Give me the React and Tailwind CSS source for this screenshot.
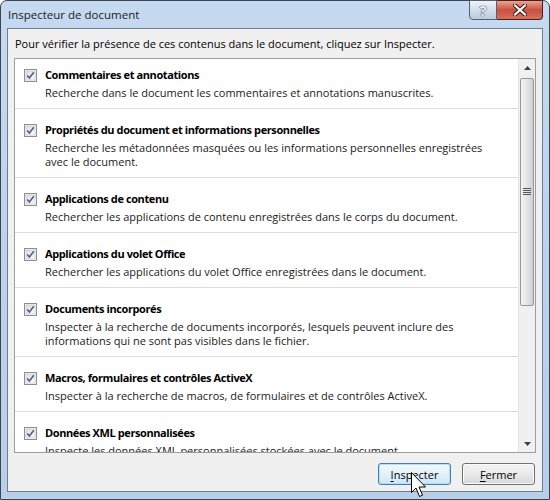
const items = [
  {
    title: 'Commentaires et annotations',
    desc: ['Recherche dans le document les commentaires et annotations manuscrites.'],
  },
  {
    title: 'Propriétés du document et informations personnelles',
    desc: [
      'Recherche les métadonnées masquées ou les informations personnelles enregistrées',
      'avec le document.',
    ],
  },
  {
    title: 'Applications de contenu',
    desc: ['Rechercher les applications de contenu enregistrées dans le corps du document.'],
  },
  {
    title: 'Applications du volet Office',
    desc: ['Rechercher les applications du volet Office enregistrées dans le document.'],
  },
  {
    title: 'Documents incorporés',
    desc: [
      'Inspecter à la recherche de documents incorporés, lesquels peuvent inclure des',
      'informations qui ne sont pas visibles dans le fichier.',
    ],
  },
  {
    title: 'Macros, formulaires et contrôles ActiveX',
    desc: ['Inspecter à la recherche de macros, de formulaires et de contrôles ActiveX.'],
  },
  {
    title: 'Données XML personnalisées',
    desc: ['Inspecte les données XML personnalisées stockées avec le document.'],
  },
];

function CheckBox() {
  return (
    <svg width="13" height="13" viewBox="0 0 13 13" className="shrink-0">
      <defs>
        <linearGradient id="cbg" x1="0" y1="0" x2="1" y2="1">
          <stop offset="0" stopColor="#dcdcdc" />
          <stop offset="1" stopColor="#fbfbfb" />
        </linearGradient>
      </defs>
      <rect x="0.5" y="0.5" width="12" height="12" fill="#f4f4f4" stroke="#8e8f8f" />
      <rect x="2" y="2" width="9" height="9" fill="url(#cbg)" stroke="#c6c6c6" strokeWidth="0.6" />
      <path d="M3.2 6.4 L5.4 9 L9.8 3.2" fill="none" stroke="#4a5f97" strokeWidth="1.6" />
    </svg>
  );
}

function Item({ item, first }) {
  return (
    <div className={`border-b border-[#dcdcdc] pb-[8px] ${first ? 'pt-[8px]' : 'pt-[13px]'}`}>
      <div className="flex items-center gap-[8px] pl-[9px]">
        <CheckBox />
        <span className="font-bold leading-[16px] tracking-[-0.4px] text-[#000]">{item.title}</span>
      </div>
      <div className="mt-[3px] pl-[30px] leading-[14px] text-[#1a1a1a]">
        {item.desc.map((d, i) => (
          <div key={i}>{d}</div>
        ))}
      </div>
    </div>
  );
}

function Scrollbar() {
  return (
    <div className="flex w-[17px] shrink-0 flex-col bg-[#f0f0f0] border-l border-[#e6e6e6]">
      <div className="flex h-[17px] items-center justify-center">
        <svg width="7" height="4" viewBox="0 0 7 4"><path d="M0 4 L3.5 0 L7 4 Z" fill="#404040" /></svg>
      </div>
      <div className="mx-[1px] mt-[2px] flex h-[228px] items-center justify-center rounded-[2px] border border-[#979797] bg-gradient-to-r from-[#f3f3f3] via-[#e4e4e4] to-[#cfcfcf]">
        <svg width="8" height="8" viewBox="0 0 8 8">
          <path d="M0 0.5H8M0 2.5H8M0 4.5H8M0 6.5H8" stroke="#585858" strokeWidth="1" />
        </svg>
      </div>
      <div className="flex-1" />
      <div className="flex h-[17px] items-center justify-center">
        <svg width="7" height="4" viewBox="0 0 7 4"><path d="M0 0 L3.5 4 L7 0 Z" fill="#404040" /></svg>
      </div>
    </div>
  );
}

function Cursor() {
  return (
    <svg width="16" height="26" viewBox="0 0 16 26" className="absolute left-[411px] top-[472px]">
      <path
        d="M0.5 0.5 L0.5 20.5 L5 16 L8.5 24.5 L11.5 23.2 L8 15 L14.5 15 Z"
        fill="#fff"
        stroke="#000"
        strokeWidth="1"
        strokeLinejoin="round"
      />
    </svg>
  );
}

export default function App() {
  return (
    <div
      className="relative h-[500px] w-[550px] overflow-hidden text-[11px] text-black"
      style={{ fontFamily: '"Open Sans", "Noto Sans", sans-serif' }}
    >
      <div className="flex h-full w-full flex-col rounded-t-[7px] border border-[#3b4452] bg-gradient-to-b from-[#c5daf0] via-[#bcd3ec] to-[#b7cfe9]">
        <div className="flex h-[27px] shrink-0 items-start">
          <div className="pl-[7px] pt-[6px] text-[11.5px] leading-[16px] text-[#1b1b1b]">Inspecteur de document</div>
          <div className="ml-auto mr-[6px] -mt-[1px] flex">
            <div className="flex h-[20px] w-[28px] items-center justify-center rounded-bl-[4px] border border-[#57616e] bg-gradient-to-b from-[#eef3f9] via-[#d2deeb] to-[#b9cbe0]">
              <span className="text-[15px] font-bold leading-none text-[#eef1f5] [text-shadow:0_0_1px_#2b3340,0_0_1px_#2b3340]">?</span>
            </div>
            <div className="flex h-[20px] w-[46px] items-center justify-center rounded-br-[4px] border border-l-0 border-[#4a1f1a] bg-gradient-to-b from-[#e9a493] via-[#c9503f] to-[#d3705b]">
              <svg width="14" height="12" viewBox="0 0 14 12">
                <path d="M2 1.5 L12 10.5 M12 1.5 L2 10.5" stroke="#3a1a14" strokeWidth="4.2" strokeLinecap="square" />
                <path d="M2 1.5 L12 10.5 M12 1.5 L2 10.5" stroke="#fff" strokeWidth="2.2" strokeLinecap="square" />
              </svg>
            </div>
          </div>
        </div>
        <div className="mx-[6px] mb-[7px] flex flex-1 flex-col border border-[#6f7f92] bg-[#f0f0f0]">
          <div className="pl-[7px] pt-[7px] leading-[16px]">
            Pour vérifier la présence de ces contenus dans le document, cliquez sur Inspecter.
          </div>
          <div className="mx-[6px] mt-[6px] flex h-[395px] border border-[#9d9d9d] bg-white">
            <div className="flex-1 overflow-hidden">
              {items.map((it, i) => (
                <Item key={i} item={it} first={i === 0} />
              ))}
            </div>
            <Scrollbar />
          </div>
          <div className="mt-[10px] flex justify-end gap-[11px] pr-[7px]">
            <button className="h-[22px] w-[73px] rounded-[3px] border border-[#3c7fb1] bg-gradient-to-b from-[#f2f9fd] via-[#e3f1fb] to-[#cbe6f7] leading-none shadow-[inset_0_0_0_1px_#b7e0f8]">
              <span className="underline underline-offset-2">I</span>nspecter
            </button>
            <button className="h-[22px] w-[73px] rounded-[3px] border border-[#707070] bg-gradient-to-b from-[#f2f2f2] via-[#ebebeb] to-[#d6d6d6] leading-none shadow-[inset_0_0_0_1px_#fbfbfb]">
              <span className="underline underline-offset-2">F</span>ermer
            </button>
          </div>
        </div>
      </div>
      <Cursor />
    </div>
  );
}
